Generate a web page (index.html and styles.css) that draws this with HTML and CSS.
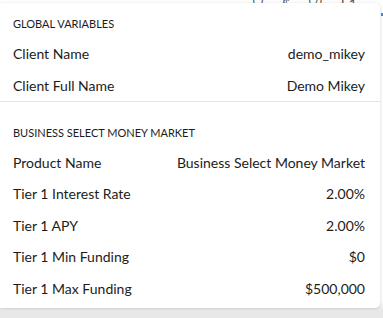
FILE: index.html
```html
<!DOCTYPE html>
<html lang="en">

<head>
    <meta charset="UTF-8">
    <meta name="viewport" content="width=device-width, initial-scale=1.0">
    <title>Variables</title>
    <link rel="stylesheet" href="styles.css">
</head>

<body>
    <div class="backdrop">
        <div class="behind">{ }&nbsp;&nbsp;&nbsp;&nbsp;&nbsp;$&nbsp;&nbsp;&nbsp;&nbsp;&nbsp;{/}&nbsp;&nbsp;&nbsp;&nbsp;&nbsp;E1</div>

        <div class="popover">
            <div class="group">
                <h3 class="group-title">GLOBAL VARIABLES</h3>
                <div class="var-row">
                    <span class="var-name">Client Name</span>
                    <span class="var-value">demo_mikey</span>
                </div>
                <div class="var-row">
                    <span class="var-name">Client Full Name</span>
                    <span class="var-value">Demo Mikey</span>
                </div>
            </div>

            <div class="group">
                <h3 class="group-title">BUSINESS SELECT MONEY MARKET</h3>
                <div class="var-row">
                    <span class="var-name">Product Name</span>
                    <span class="var-value">Business Select Money Market</span>
                </div>
                <div class="var-row">
                    <span class="var-name">Tier 1 Interest Rate</span>
                    <span class="var-value">2.00%</span>
                </div>
                <div class="var-row">
                    <span class="var-name">Tier 1 APY</span>
                    <span class="var-value">2.00%</span>
                </div>
                <div class="var-row">
                    <span class="var-name">Tier 1 Min Funding</span>
                    <span class="var-value">$0</span>
                </div>
                <div class="var-row">
                    <span class="var-name">Tier 1 Max Funding</span>
                    <span class="var-value">$500,000</span>
                </div>
            </div>
        </div>

        <!-- editor gutter markers to the right of the popover -->
        <span class="marker marker-active"></span>
    </div>
</body>

</html>
```

FILE: styles.css
```css
body {
    font-family: 'Lato', sans-serif;
    margin: 0;
    padding: 0;
    background: #e8e8e8;
    color: #1c1c1c;
}

.backdrop {
    position: relative;
    width: 383px;
    height: 310px;
    background: linear-gradient(to bottom, #fff 0, #fff 300px, #ececec 310px);
}

/* editor text peeking out above the popover */
.behind {
    height: 3px;
    overflow: hidden;
    padding-left: 252px;
    font-size: 14px;
    line-height: 8px;
    color: #555;
    white-space: nowrap;
}

.popover {
    width: 380px;
    box-sizing: border-box;
    padding-bottom: 4px;
    background: #fff;
    border-radius: 0 5px 5px 0;
    box-shadow: 0 1px 4px rgba(0, 0, 0, 0.16);
}

.group {
    padding: 7px 15px 0 13px;
}

.group + .group {
    border-top: 1px solid #e4e4e4;
    padding-top: 16.5px;
}

.group-title {
    margin: 0;
    height: 28px;
    line-height: 28px;
    font-size: 11px;
    font-weight: normal;
    color: #1c1c1c;
}

.var-row {
    display: flex;
    justify-content: space-between;
    align-items: center;
    height: 31.5px;
    font-size: 14px;
}

.marker {
    position: absolute;
    right: 0;
    width: 2px;
    height: 3px;
    background: #c8c8c8;
}

.marker-active {
    top: 13px;
    background: #3b82f6;
}
```
